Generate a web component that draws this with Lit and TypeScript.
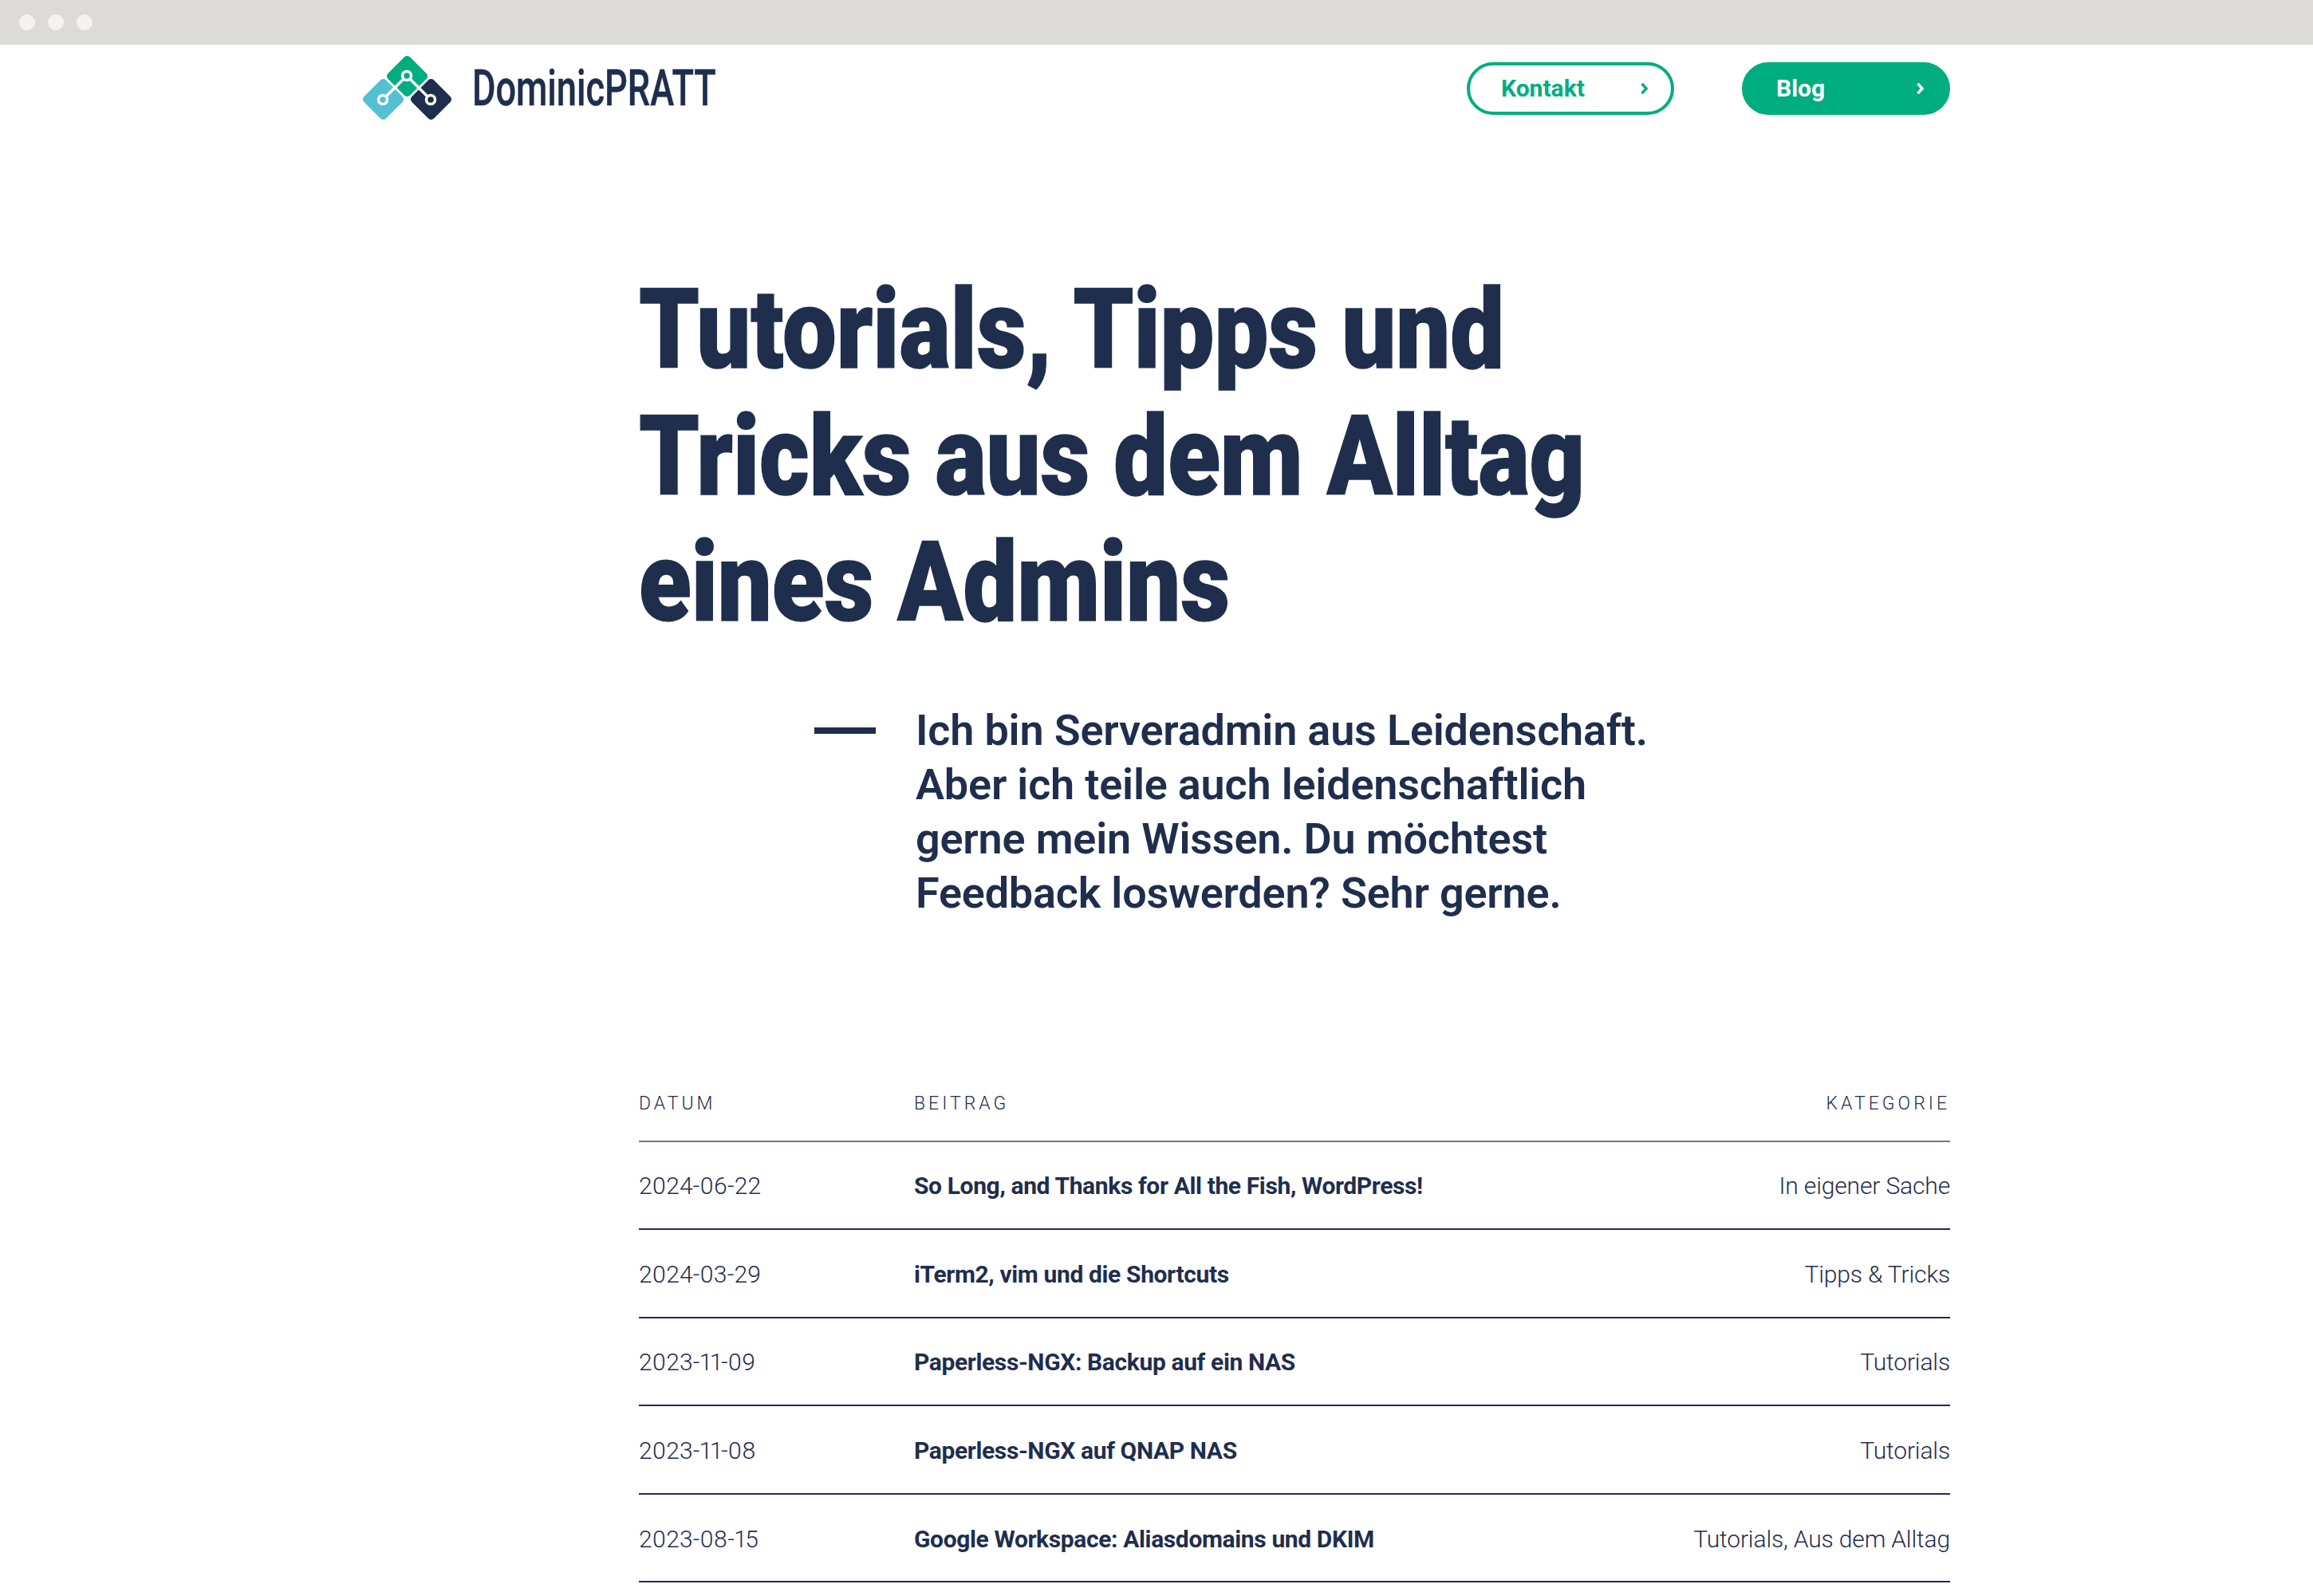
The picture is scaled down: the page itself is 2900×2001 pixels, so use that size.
import { LitElement, html, css, svg } from "lit";
import { customElement } from "lit/decorators.js";

const rows = [
  ["2024-06-22", "So Long, and Thanks for All the Fish, WordPress!", "In eigener Sache"],
  ["2024-03-29", "iTerm2, vim und die Shortcuts", "Tipps & Tricks"],
  ["2023-11-09", "Paperless-NGX: Backup auf ein NAS", "Tutorials"],
  ["2023-11-08", "Paperless-NGX auf QNAP NAS", "Tutorials"],
  ["2023-08-15", "Google Workspace: Aliasdomains und DKIM", "Tutorials, Aus dem Alltag"],
];

const diamond = (cx: number, cy: number, fill: string) =>
  svg`<rect x=${cx - 19.5} y=${cy - 19.5} width="39" height="39" rx="5" fill=${fill} transform="rotate(45 ${cx} ${cy})"></rect>`;
const node = (cx: number, cy: number, fill: string) =>
  svg`<circle cx=${cx} cy=${cy} r="5.5" fill=${fill} stroke="#fff" stroke-width="3.5"></circle>`;

const chevron = html`<svg class="chev" viewBox="0 0 10 14" width="10" height="14"><path d="M1.5 .8l5.6 6.2-5.6 6.2" fill="none" stroke="currentColor" stroke-width="3.4"></path></svg>`;

@customElement("app-root")
export class AppRoot extends LitElement {
  static styles = css`
    :host { display: block; width: 2900px; height: 2001px; overflow: hidden; background: #fff; color: #1f2e4d; font-family: Roboto, "Noto Sans", sans-serif; }
    .chrome { height: 56px; background: #dcdbd9; display: flex; align-items: center; gap: 16px; padding-left: 24px; box-sizing: border-box; }
    .chrome i { width: 20px; height: 20px; border-radius: 50%; background: #f4f3f1; }
    header { display: flex; align-items: center; justify-content: space-between; padding: 14px 455px 0 455px; height: 80px; }
    .brand { display: flex; align-items: center; gap: 26px; }
    .brand svg { display: block; }
    .word { display: inline-block; box-sizing: content-box; padding-top: 2px; font-size: 62.5px; line-height: 80px; font-weight: 500; transform-origin: left center; transform: scaleX(0.722); white-space: nowrap; width: 308px; -webkit-text-stroke: 0.5px #1f2e4d; }
    nav { display: flex; gap: 85px; position: relative; top: 1px; }
    .btn { box-sizing: border-box; display: flex; align-items: center; justify-content: space-between; height: 66px; border-radius: 33px; border: 4px solid #00ad7f; font-size: 30px; font-weight: 700; color: #00ad7f; padding: 0 28px 0 39px; }
    .btn.k { width: 260px; }
    .btn.b { width: 261px; background: #00ad7f; color: #fff; }
    .btn span { padding-bottom: 2px; }
    main { margin: 0 455px 0 801px; }
    h1 { margin: 0; padding-top: 184px; font-weight: 900; font-size: 140px; line-height: 158.5px; -webkit-text-stroke: 1.5px #1f2e4d; }
    h1 span { display: block; white-space: nowrap; transform-origin: left center; transform: scaleX(0.861); }
    .lead { display: flex; align-items: flex-start; margin-top: 72px; padding-left: 220px; gap: 50px; }
    .dash { width: 77px; height: 8px; background: #1f2e4d; margin-top: 30px; flex: none; }
    .lead p { margin: 0; font-size: 54px; font-weight: 600; line-height: 68px; white-space: nowrap; letter-spacing: -0.2px; }
    .thead, .row { display: grid; grid-template-columns: 345px 1fr auto; align-items: center; box-sizing: content-box; }
    .thead { margin-top: 180px; height: 93px; padding-top: 3px; border-bottom: 2px solid #6b7890; font-size: 23px; font-weight: 300; letter-spacing: 4px; }
    .row { height: 106.6px; padding-top: 2px; border-bottom: 2px solid #1f2e4d; font-size: 30px; font-weight: 300; }
    .row span:first-child { letter-spacing: 0.15px; font-variant-numeric: proportional-nums; }
    .row b { font-weight: 700; letter-spacing: -0.37px; }
    .r { text-align: right; }
    .row .r { letter-spacing: -0.15px; }
  `;

  render() {
    return html`
      <div class="chrome"><i></i><i></i><i></i></div>
      <header>
        <div class="brand">
          <svg width="111" height="80" viewBox="0 0 111 80">
            ${diamond(25.5, 54.5, "#54c0d2")}
            ${diamond(55.5, 25.5, "#00ad7f")}
            ${diamond(85.5, 54.5, "#1f2e4d")}
            <path d="M25 55L55 25L85 55" fill="none" stroke="#fff" stroke-width="3.5"></path>
            ${node(25, 55, "#54c0d2")}${node(55, 25, "#00ad7f")}${node(85, 55, "#1f2e4d")}
          </svg>
          <span class="word">DominicPRATT</span>
        </div>
        <nav>
          <div class="btn k"><span>Kontakt</span>${chevron}</div>
          <div class="btn b"><span>Blog</span>${chevron}</div>
        </nav>
      </header>
      <main>
        <h1><span>Tutorials, Tipps und</span><span>Tricks aus dem Alltag</span><span>eines Admins</span></h1>
        <div class="lead">
          <div class="dash"></div>
          <p>Ich bin Serveradmin aus Leidenschaft.<br />Aber ich teile auch leidenschaftlich<br />gerne mein Wissen. Du möchtest<br />Feedback loswerden? Sehr gerne.</p>
        </div>
        <div class="thead"><span>DATUM</span><span>BEITRAG</span><span class="r">KATEGORIE</span></div>
        ${rows.map((r) => html`<div class="row"><span>${r[0]}</span><b>${r[1]}</b><span class="r">${r[2]}</span></div>`)}
      </main>
    `;
  }
}
